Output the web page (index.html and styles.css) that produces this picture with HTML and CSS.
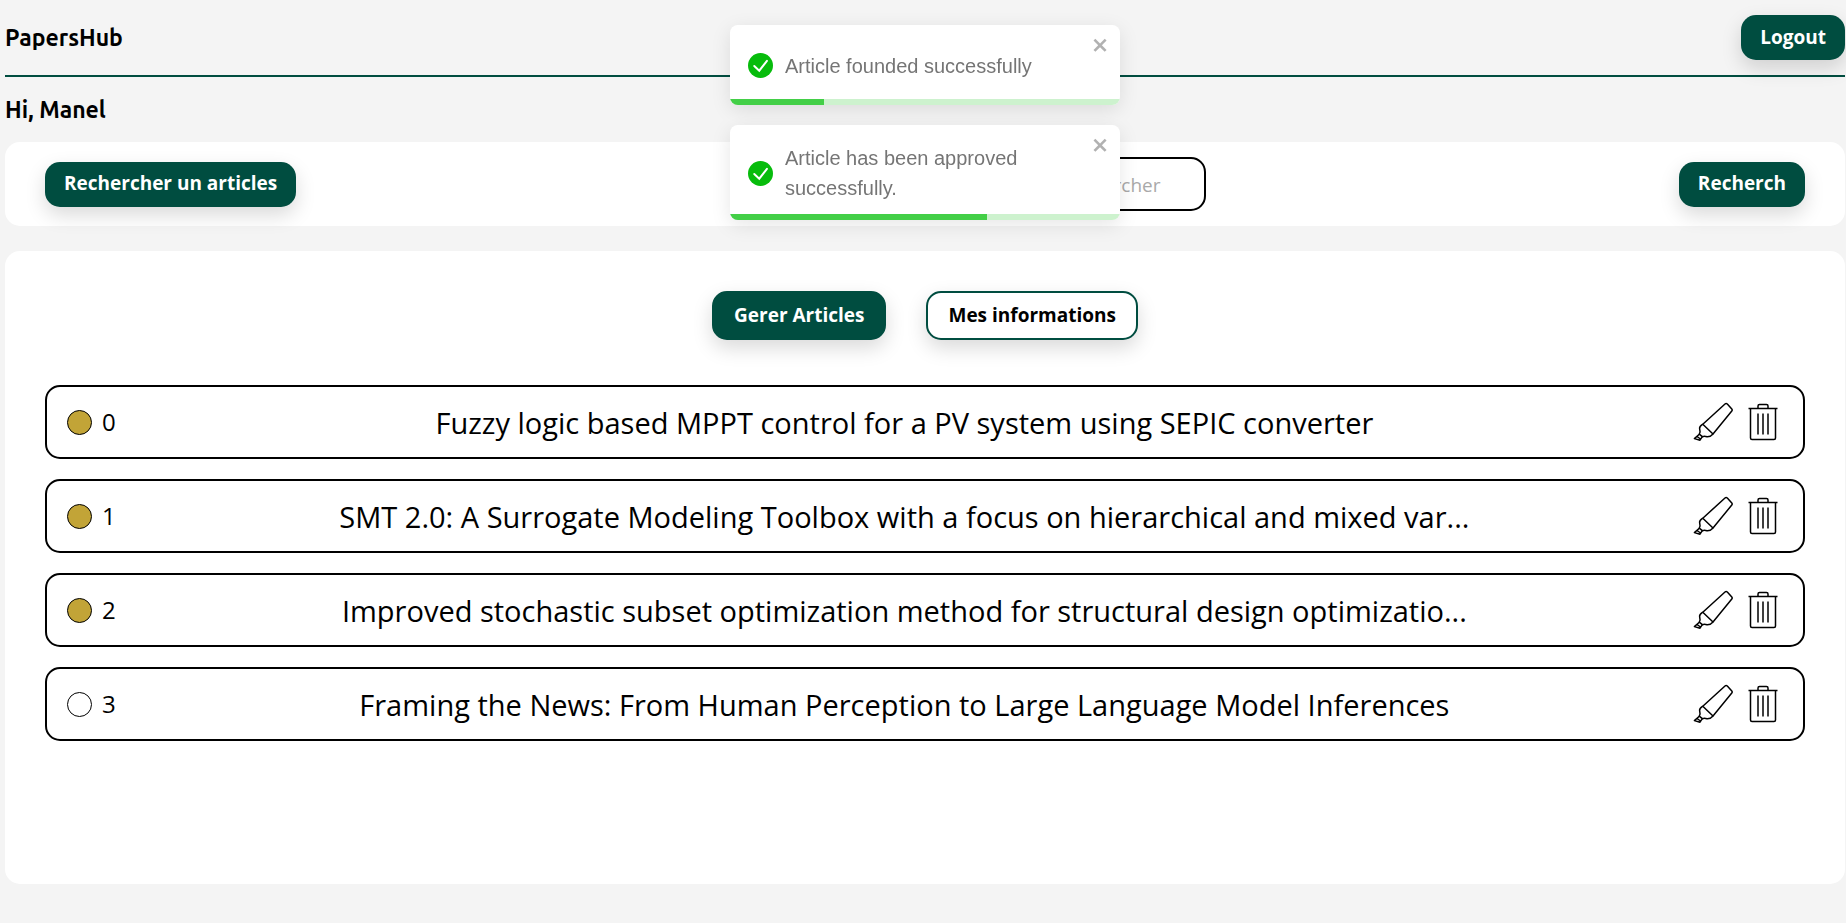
FILE: index.html
```
<!DOCTYPE html>
<html lang="fr">
<head>
    <meta charset="UTF-8">
    <meta name="viewport" content="width=device-width, initial-scale=1.0">
    <title>PapersHub</title>
    <link rel="stylesheet" href="styles.css">
</head>
<body>
    <!-- Shared icons -->
    <svg class="sprite" aria-hidden="true">
        <symbol id="icon-edit" viewBox="0 0 40 40">
            <path d="M9.800 22.200L32 2Q33.200 1 34.300 2L38.800 7Q39.600 8 38.800 9L20 32Z"/>
            <path d="M9.800 22.200Q6.300 24.500 6.600 26.500Q7.600 30 6.300 32.200L9.300 34.700Q11.500 33.800 14 34.800Q17.500 35 20 32"/>
            <path d="M6.300 32.200L1.400 36.600L7 38.200L9.300 34.700M4 34.500L7.500 37"/>
        </symbol>
        <symbol id="icon-trash" viewBox="0 0 40 40">
            <path d="M5.500 6.500H34.500M7.500 6.500V36Q7.500 37.500 9 37.500H31Q32.500 37.500 32.500 36V6.500M15 6V4Q15 2.500 16.500 2.500H23.500Q25 2.500 25 4V6M15 11.500V32.500M20 11.500V32.500M25 11.500V32.500"/>
        </symbol>
        <symbol id="icon-check" viewBox="0 0 24 24">
            <circle cx="12" cy="12" r="12" fill="#07bc0c"/>
            <path d="M6 12.500L10.800 17L18.200 7.500" fill="none" stroke="#fff" stroke-width="1.900" stroke-linecap="round"/>
        </symbol>
        <symbol id="icon-close" viewBox="0 0 14 16">
            <path d="M7.710 8.230l3.750 3.750-1.480 1.480-3.750-3.750-3.750 3.750L1 11.980l3.750-3.750L1 4.480 2.480 3l3.750 3.750L9.980 3l1.480 1.480-3.750 3.750z"/>
        </symbol>
    </svg>

    <header class="navbar">
        <h1>PapersHub</h1>
        <button class="btn">Logout</button>
    </header>

    <h2 class="greeting">Hi, Manel</h2>

    <form class="search-bar">
        <button type="button" class="btn">Rechercher un articles</button>
        <input type="text" class="search-input" placeholder="Rechercher" aria-label="Rechercher">
        <button type="button" class="btn">Recherch</button>
    </form>

    <main class="panel">
        <nav class="tabs">
            <button class="btn tab active">Gerer Articles</button>
            <button class="btn tab">Mes informations</button>
        </nav>

        <ul class="articles">
            <li class="article">
                <div class="article-id"><span class="status approved"></span>0</div>
                <p class="title">Fuzzy logic based MPPT control for a PV system using SEPIC converter</p>
                <div class="actions">
                    <button class="icon-btn" aria-label="Modifier"><svg><use href="#icon-edit"/></svg></button>
                    <button class="icon-btn" aria-label="Supprimer"><svg><use href="#icon-trash"/></svg></button>
                </div>
            </li>
            <li class="article">
                <div class="article-id"><span class="status approved"></span>1</div>
                <p class="title">SMT 2.0: A Surrogate Modeling Toolbox with a focus on hierarchical and mixed var...</p>
                <div class="actions">
                    <button class="icon-btn" aria-label="Modifier"><svg><use href="#icon-edit"/></svg></button>
                    <button class="icon-btn" aria-label="Supprimer"><svg><use href="#icon-trash"/></svg></button>
                </div>
            </li>
            <li class="article">
                <div class="article-id"><span class="status approved"></span>2</div>
                <p class="title">Improved stochastic subset optimization method for structural design optimizatio...</p>
                <div class="actions">
                    <button class="icon-btn" aria-label="Modifier"><svg><use href="#icon-edit"/></svg></button>
                    <button class="icon-btn" aria-label="Supprimer"><svg><use href="#icon-trash"/></svg></button>
                </div>
            </li>
            <li class="article">
                <div class="article-id"><span class="status"></span>3</div>
                <p class="title">Framing the News: From Human Perception to Large Language Model Inferences</p>
                <div class="actions">
                    <button class="icon-btn" aria-label="Modifier"><svg><use href="#icon-edit"/></svg></button>
                    <button class="icon-btn" aria-label="Supprimer"><svg><use href="#icon-trash"/></svg></button>
                </div>
            </li>
        </ul>
    </main>

    <!-- Notifications -->
    <div class="toasts">
        <div class="toast" role="alert">
            <svg class="toast-icon"><use href="#icon-check"/></svg>
            <p>Article founded successfully</p>
            <button class="toast-close" aria-label="Fermer"><svg><use href="#icon-close"/></svg></button>
            <div class="progress"><div class="progress-fill" style="width: 24%"></div></div>
        </div>
        <div class="toast" role="alert">
            <svg class="toast-icon"><use href="#icon-check"/></svg>
            <p>Article has been approved successfully.</p>
            <button class="toast-close" aria-label="Fermer"><svg><use href="#icon-close"/></svg></button>
            <div class="progress"><div class="progress-fill" style="width: 66%"></div></div>
        </div>
    </div>
</body>
</html>
```
FILE: styles.css
```
* {
    margin: 0;
    padding: 0;
    box-sizing: border-box;
}

body {
    font-family: "Segoe UI", "Open Sans", sans-serif;
    background-color: #f4f4f4;
    color: #000;
    min-height: 100vh;
    padding: 0 1px 39px 5px;
    display: flex;
    flex-direction: column;
}

.sprite {
    position: absolute;
    width: 0;
    height: 0;
}

.navbar {
    display: flex;
    justify-content: space-between;
    align-items: center;
    padding: 15px 0;
    border-bottom: 2px solid #004d40;
}

h1,
.greeting {
    font-family: Ubuntu, "Noto Sans", sans-serif;
    font-size: 23px;
    line-height: 30px;
    font-weight: bold;
}

.greeting {
    padding: 18px 0 17px;
}

.btn {
    height: 45px;
    padding: 0 19px 2px;
    font-family: inherit;
    font-size: 19px;
    font-weight: bold;
    color: #fff;
    background-color: #004d40;
    border: none;
    border-radius: 15px;
    box-shadow: 0 8px 20px rgba(0, 0, 0, 0.15);
    cursor: pointer;
}

.search-bar {
    display: flex;
    justify-content: space-between;
    align-items: center;
    padding: 15px 40px;
    background-color: #fff;
    border-radius: 15px;
}

.search-input {
    width: 436px;
    height: 54px;
    padding: 2px 43px 0 20px;
    font-family: inherit;
    font-size: 19px;
    text-align: right;
    background-color: #fff;
    border: 2px solid #000;
    border-radius: 15px;
}

.search-input::placeholder {
    color: #a9a9a9;
}

.panel {
    flex: 1;
    margin-top: 25px;
    padding: 40px;
    background-color: #fff;
    border-radius: 15px;
}

.tabs {
    display: flex;
    justify-content: center;
    gap: 40px;
    margin-bottom: 45px;
}

.tab {
    height: 49px;
    padding: 0 20px 2px;
    color: #000;
    background-color: #fff;
    border: 2px solid #004d40;
}

.tab.active {
    color: #fff;
    background-color: #004d40;
}

.articles {
    list-style: none;
    display: flex;
    flex-direction: column;
    gap: 20px;
}

.article {
    display: flex;
    justify-content: space-between;
    align-items: center;
    padding: 15px 20px;
    border: 2px solid #000;
    border-radius: 15px;
}

.article-id {
    display: flex;
    align-items: center;
    gap: 10px;
    font-size: 24px;
    line-height: 40px;
}

.status {
    width: 25px;
    height: 25px;
    border: 1px solid #000;
    border-radius: 50%;
}

.status.approved {
    background-color: #c2a437;
}

.title {
    padding-top: 2px;
    font-size: 29px;
    line-height: 38px;
}

.actions {
    display: flex;
    gap: 10px;
}

.icon-btn {
    width: 40px;
    height: 40px;
    background: none;
    border: none;
    cursor: pointer;
}

.icon-btn svg {
    display: block;
    width: 40px;
    height: 40px;
    fill: none;
    stroke: #000;
    stroke-width: 1.5;
    stroke-linejoin: round;
}

.toasts {
    position: fixed;
    top: 25px;
    left: 5px;
    right: 1px;
    display: flex;
    flex-direction: column;
    align-items: center;
    gap: 20px;
    pointer-events: none;
}

.toast {
    position: relative;
    display: flex;
    align-items: center;
    gap: 12px;
    width: 390px;
    min-height: 80px;
    padding: 18px 40px 17px 18px;
    font-family: "Liberation Sans", Arial, sans-serif;
    font-size: 20px;
    line-height: 30px;
    color: #757575;
    background-color: #fff;
    border-radius: 8px;
    box-shadow: 0 5px 20px rgba(0, 0, 0, 0.1);
    overflow: hidden;
    pointer-events: auto;
}

.toast-icon {
    flex-shrink: 0;
    width: 25px;
    height: 25px;
}

.toast-close {
    position: absolute;
    top: 10px;
    right: 10px;
    width: 18px;
    height: 20px;
    background: none;
    border: none;
    opacity: 0.3;
    cursor: pointer;
}

.toast-close svg {
    display: block;
    width: 18px;
    height: 20px;
}

.progress {
    position: absolute;
    left: 0;
    right: 0;
    bottom: 0;
    height: 6px;
    background-color: #cdf2ce;
}

.progress-fill {
    height: 100%;
    background-color: #43cf47;
}
```
